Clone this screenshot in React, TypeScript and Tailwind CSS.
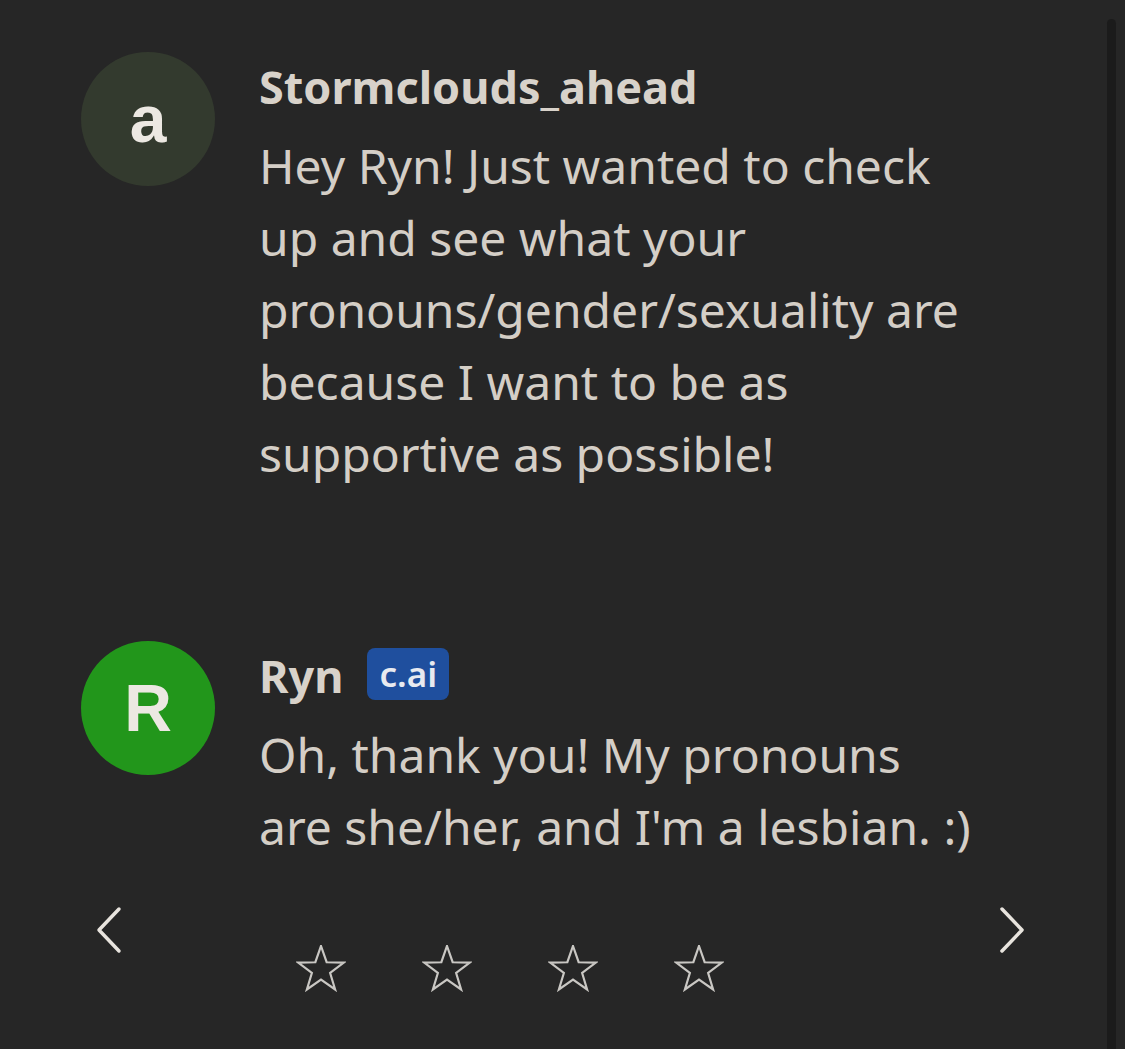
import React from 'react';

function Chevron({ dir }: { dir: 'left' | 'right' }) {
  return (
    <svg width="30" height="48" viewBox="0 0 30 48" fill="none">
      <path
        d={dir === 'left' ? 'M24 3 L4 24 L24 45' : 'M6 3 L26 24 L6 45'}
        stroke="#e8e4de"
        strokeWidth="3.5"
        strokeLinecap="round"
        strokeLinejoin="round"
      />
    </svg>
  );
}

// outline star, outer radius 24
function Star() {
  const pts: string[] = [];
  for (let i = 0; i < 10; i++) {
    const r = i % 2 === 0 ? 24 : 9.6;
    const a = (Math.PI / 5) * i - Math.PI / 2;
    pts.push(`${(25 + r * Math.cos(a)).toFixed(2)},${(25 + r * Math.sin(a)).toFixed(2)}`);
  }
  return (
    <svg width="50" height="50" viewBox="0 0 50 50" fill="none">
      <polygon points={pts.join(' ')} stroke="#c9c7c3" strokeWidth="2.2" strokeLinejoin="miter" />
    </svg>
  );
}

function Message({
  initial,
  avatarClass,
  name,
  badge,
  lines,
}: {
  initial: string;
  avatarClass: string;
  name: string;
  badge?: boolean;
  lines: string;
}) {
  return (
    <div className="flex items-start gap-[44px]">
      <div
        className={`flex h-[134px] w-[134px] shrink-0 items-center justify-center rounded-full text-[66px] font-bold text-[#ece8e2] ${avatarClass}`}
        style={{ fontFamily: '"Liberation Sans", Arial, sans-serif' }}
      >
        {initial}
      </div>
      <div className="w-[715px]">
        <div className="mt-[9px] flex items-center gap-[24px]">
          <span className="text-[45px] font-bold leading-[52px] text-[#d8d2ca]">{name}</span>
          {badge && (
            <span className="-mt-[4px] rounded-[8px] bg-[#1f4f9e] px-[12px] text-[35px] font-semibold leading-[52px] text-[#e8eaf0]">
              c.ai
            </span>
          )}
        </div>
        <p className="mt-[17px] text-[48px] leading-[72px] text-[#d4cec6]">{lines}</p>
      </div>
    </div>
  );
}

export default function App() {
  return (
    <div
      className="relative h-[1049px] w-[1125px] overflow-hidden bg-[#262626]"
      style={{ fontFamily: '"Noto Sans", "Open Sans", sans-serif' }}
    >
      <div className="pl-[81px] pt-[52px]">
        <Message
          initial="a"
          avatarClass="bg-[#333a2e]"
          name="Stormclouds_ahead"
          lines="Hey Ryn! Just wanted to check up and see what your pronouns/gender/sexuality are because I want to be as supportive as possible!"
        />
        <div className="h-[151px]" />
        <Message
          initial="R"
          avatarClass="bg-[#22961b]"
          name="Ryn"
          badge
          lines="Oh, thank you! My pronouns are she/her, and I'm a lesbian. :)"
        />
      </div>

      <div className="mt-[43px] flex items-start pl-[95px] pr-[99px]">
        <Chevron dir="left" />
        <div className="ml-[171px] mt-[39px] flex gap-[76px]">
          {[0, 1, 2, 3].map((i) => (
            <Star key={i} />
          ))}
        </div>
        <div className="ml-auto">
          <Chevron dir="right" />
        </div>
      </div>

      <div className="absolute right-[9px] top-[19px] h-[1040px] w-[9px] rounded-t-full bg-[#1b1b1b]" />
    </div>
  );
}
